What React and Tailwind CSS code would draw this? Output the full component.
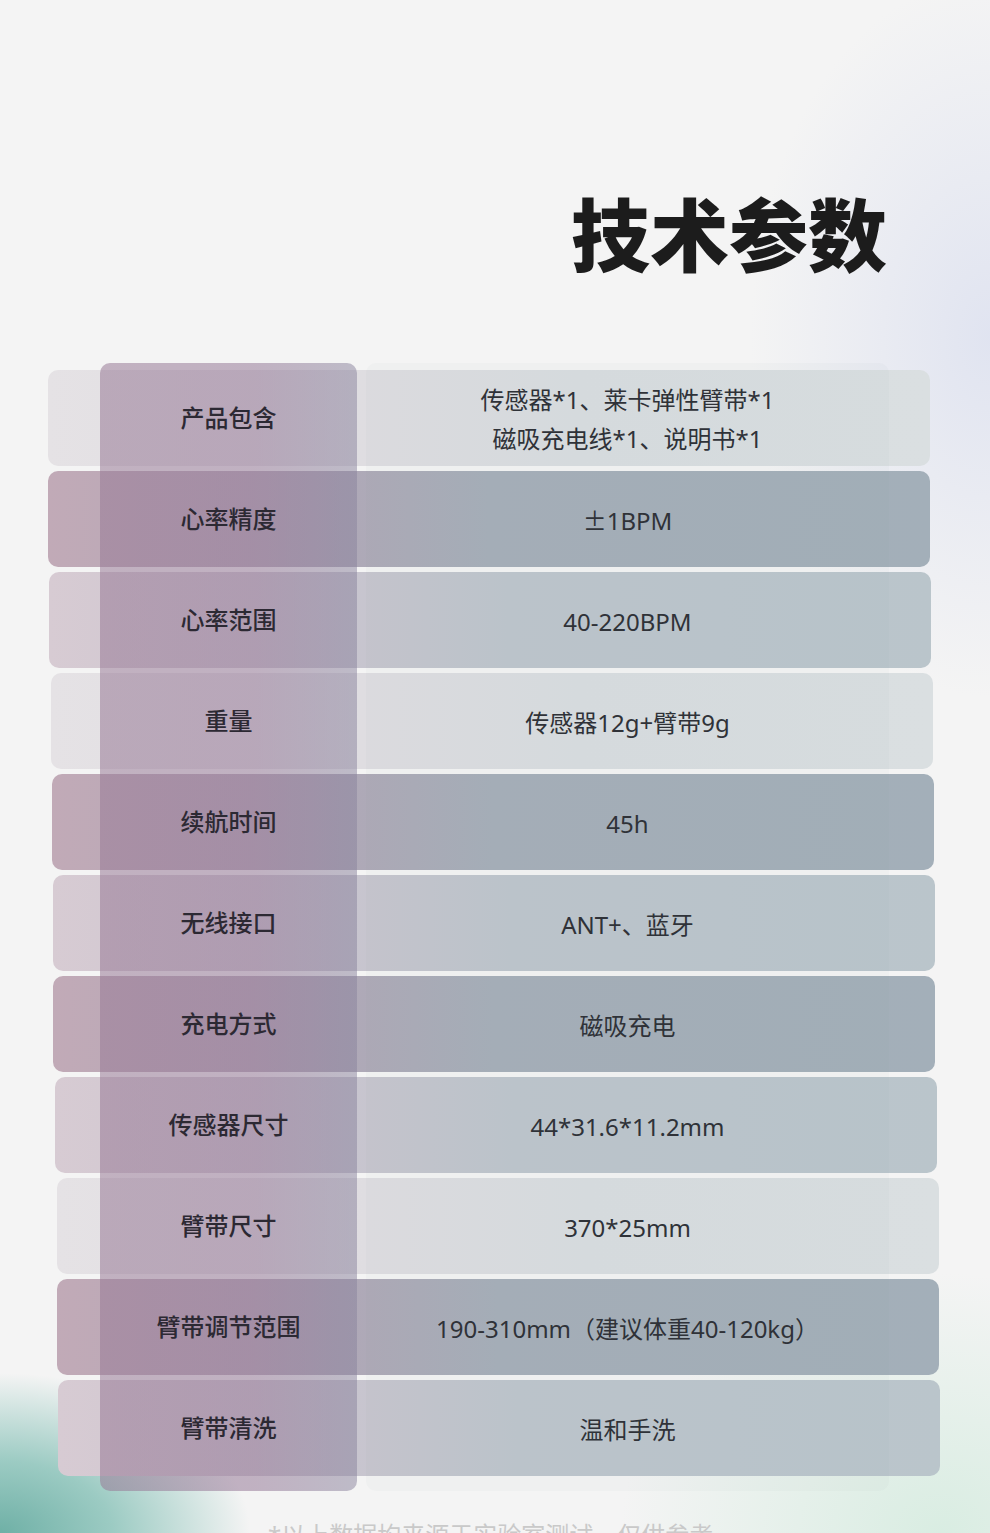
import React from "react"

const rows = [
  { label: "产品包含", value: ["传感器*1、莱卡弹性臂带*1", "磁吸充电线*1、说明书*1"], tone: "light", ml: "ml-[48px]", sp: "w-[52px]" },
  { label: "心率精度", value: [<><span className="font-['Noto_Sans_CJK_SC']">±</span>1BPM</>], tone: "dark", ml: "ml-[48px]", sp: "w-[52px]" },
  { label: "心率范围", value: ["40-220BPM"], tone: "mid", ml: "ml-[49px]", sp: "w-[51px]" },
  { label: "重量", value: ["传感器12g+臂带9g"], tone: "light", ml: "ml-[51px]", sp: "w-[49px]" },
  { label: "续航时间", value: ["45h"], tone: "dark", ml: "ml-[52px]", sp: "w-[48px]" },
  { label: "无线接口", value: ["ANT+、蓝牙"], tone: "mid", ml: "ml-[53px]", sp: "w-[47px]" },
  { label: "充电方式", value: ["磁吸充电"], tone: "dark", ml: "ml-[53px]", sp: "w-[47px]" },
  { label: "传感器尺寸", value: ["44*31.6*11.2mm"], tone: "mid", ml: "ml-[55px]", sp: "w-[45px]" },
  { label: "臂带尺寸", value: ["370*25mm"], tone: "light", ml: "ml-[57px]", sp: "w-[43px]" },
  { label: "臂带调节范围", value: ["190-310mm（建议体重40-120kg）"], tone: "dark", ml: "ml-[57px]", sp: "w-[43px]" },
  { label: "臂带清洗", value: ["温和手洗"], tone: "mid", ml: "ml-[58px]", sp: "w-[42px]" },
]

const toneBg = {
  light: "bg-[linear-gradient(90deg,#e5e2e5_0%,#dfdde1_35%,#d9dde0_60%,#dadfe1_100%)]",
  dark: "bg-[linear-gradient(90deg,#c1aab7_0%,#b0a8b7_32%,#a6aeb9_50%,#a3afb9_100%)]",
  mid: "bg-[linear-gradient(90deg,#d7cbd3_0%,#c9c5cf_32%,#bec5cd_52%,#bac5cb_100%)]",
}

function SpecRow({ row }) {
  return (
    <div className={`${row.ml} w-[882px] h-[96px] rounded-[10px] flex items-center ${toneBg[row.tone]}`}>
      <div className={`${row.sp} shrink-0`} />
      <div className="relative z-20 w-[257px] shrink-0 text-center text-[24px] font-medium text-[#2c2933]">
        {row.label}
      </div>
      <div className="w-[9px] shrink-0" />
      <div className="relative z-20 w-[523px] shrink-0 pt-[2px] text-center text-[24px] leading-[39px] text-[#2f3238]">
        {row.value.map((line, i) => (
          <div key={i}>{line}</div>
        ))}
      </div>
    </div>
  )
}

export default function App() {
  return (
    <div
      className="relative h-[1533px] w-full overflow-hidden bg-[#f4f4f4] bg-[radial-gradient(250px_160px_at_0%_100%,#6fb0a6_0%,#9ccbc3_45%,rgba(244,244,244,0)_100%),radial-gradient(240px_360px_at_100%_22%,rgba(222,226,240,0.9)_0%,rgba(244,244,244,0)_100%),radial-gradient(320px_260px_at_95%_100%,rgba(214,236,224,0.9)_0%,rgba(244,244,244,0)_100%)]"
      style={{ fontFamily: '"Noto Sans", "Noto Sans CJK SC", sans-serif' }}
    >
      {/* 标题 */}
      <div className="flex justify-end pr-[103px] pt-[196px]">
        <h1 className="text-[79px] leading-none font-black text-[#1c1c1c]">
          技术参数
        </h1>
      </div>

      {/* 参数表 */}
      <div className="relative mt-[88px] pt-[7px] pb-[15px]">
        <div className="absolute left-[100px] top-0 bottom-0 z-10 w-[257px] rounded-[10px] bg-[linear-gradient(90deg,rgba(152,122,150,0.55)_0%,rgba(150,122,152,0.55)_60%,rgba(136,130,156,0.5)_100%)]" />
        <div className="absolute left-[366px] top-0 bottom-0 z-10 w-[523px] rounded-[10px] bg-[#8090a0]/[0.04]" />
        <div className="flex flex-col gap-[5px]">
          {rows.map((row) => (
            <SpecRow key={row.label} row={row} />
          ))}
        </div>
      </div>

      {/* 底部说明 */}
      <div className="mt-[26px] pl-[268px] text-[24px] text-[#c9c9c9]">
        *以上数据均来源于实验室测试，仅供参考
      </div>
    </div>
  )
}
